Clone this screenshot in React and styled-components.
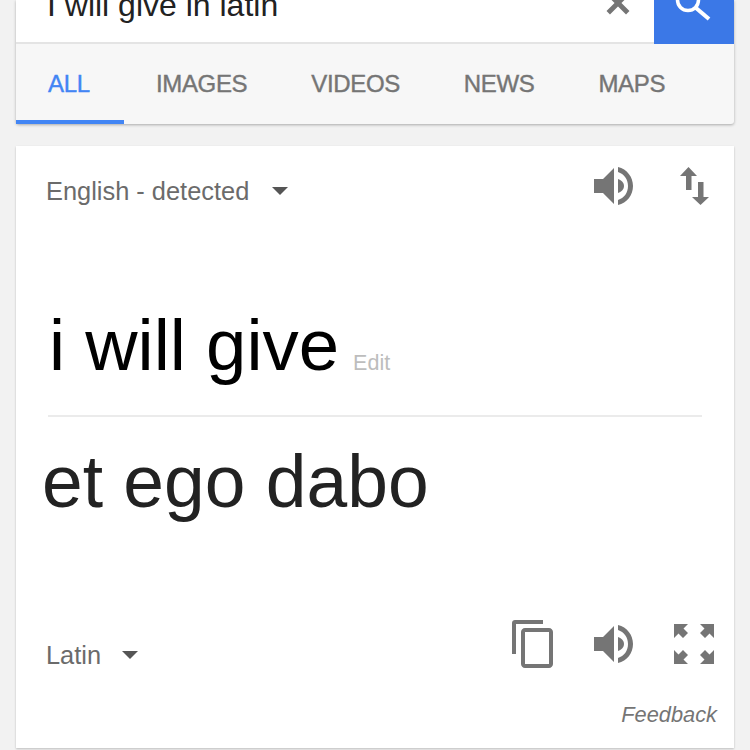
import React from "react"
import styled, { createGlobalStyle } from "styled-components"

const GlobalStyle = createGlobalStyle`
  html, body {
    margin: 0;
    padding: 0;
    background: #f2f2f2;
    font-family: "Liberation Sans", Arial, sans-serif;
  }
`

const Page = styled.div`
  width: 750px;
  height: 750px;
  overflow: hidden;
  padding: 0 16px;
  box-sizing: border-box;
  background: #f2f2f2;
`

const Header = styled.div`
  background: #f7f7f7;
  border-radius: 0 0 3px 3px;
  box-shadow: 0 1px 3px rgba(0, 0, 0, 0.3);
`

const SearchRow = styled.div`
  height: 44px;
  display: flex;
  background: #fff;
`

const QueryBox = styled.div`
  flex: 1;
  height: 44px;
  box-sizing: border-box;
  display: flex;
  justify-content: space-between;
  border-bottom: 2px solid #e4e4e4;
  overflow: hidden;
`

const Query = styled.div`
  align-self: flex-end;
  margin: 0 0 19px 31px;
  font-size: 32px;
  line-height: 36px;
  color: #222;
  white-space: nowrap;
`

const ClearIcon = styled.svg`
  width: 26px;
  height: 26px;
  margin: -10px 23px 0 0;
  flex-shrink: 0;
`

const SearchButton = styled.div`
  width: 80px;
  height: 44px;
  flex-shrink: 0;
  background: #3b78e7;
  overflow: hidden;
  display: flex;
  justify-content: center;
  align-items: flex-end;
`

const SearchIcon = styled.svg`
  width: 44px;
  height: 44px;
  margin-bottom: 19px;
  flex-shrink: 0;
`

const Tabs = styled.div`
  display: flex;
  height: 80px;
`

const Tab = styled.div`
  padding: 4px 32px 0;
  min-width: ${props => (props.active ? "108px" : "0")};
  box-sizing: border-box;
  display: flex;
  align-items: center;
  font-size: 24px;
  letter-spacing: -0.35px;
  -webkit-text-stroke: 0.4px ${props => (props.active ? "#4285f4" : "#757575")};
  color: ${props => (props.active ? "#4285f4" : "#757575")};
  border-bottom: 4px solid ${props => (props.active ? "#4285f4" : "transparent")};
`

const Card = styled.div`
  margin-top: 22px;
  height: 602px;
  background: #fff;
  box-shadow: 0 1px 2px rgba(0, 0, 0, 0.22);
  display: flex;
  flex-direction: column;
`

const TopBar = styled.div`
  height: 90px;
  display: flex;
  justify-content: space-between;
  align-items: center;
  padding: 0 25px 0 30px;
`

const LangPicker = styled.div`
  display: flex;
  align-items: center;
  height: 30px;
  font-size: 25.4px;
  color: #6b6b6b;
`

const SourceLang = styled(LangPicker)``

const TargetLang = styled(LangPicker)`
  margin-top: 20px;
`

const Caret = styled.span`
  width: 0;
  height: 0;
  margin-left: ${props => props.gap}px;
  border-left: 8px solid transparent;
  border-right: 8px solid transparent;
  border-top: 8px solid #555;
`

const TopIcons = styled.div`
  display: flex;
  align-items: center;
  gap: 47px;
  margin-bottom: 10px;
`

const BottomIcons = styled.div`
  display: flex;
  align-items: center;
  gap: 41px;
`

const Icon = styled.svg`
  width: ${props => props.w}px;
  height: ${props => props.h}px;
  fill: #757575;
  display: block;
`

const Source = styled.div`
  margin: 71px 32px 0;
  height: 108px;
  border-bottom: 2px solid #ebebeb;
  display: flex;
  align-items: baseline;
  padding-left: 1px;
`

const SourceText = styled.span`
  font-size: 72.5px;
  line-height: 76px;
  color: #000;
`

const EditLink = styled.span`
  margin-left: 14px;
  font-size: 21.5px;
  color: #bdbdbd;
`

const Target = styled.div`
  margin: 20px 0 0 26px;
  font-size: 73.2px;
  line-height: 90px;
  color: #222;
`

const BottomBar = styled.div`
  margin-top: auto;
  display: flex;
  justify-content: space-between;
  align-items: flex-start;
  padding: 0 20px 0 30px;
`

const Feedback = styled.div`
  padding: 32px 17px 21px 0;
  text-align: right;
  font-size: 21.8px;
  line-height: 25px;
  font-style: italic;
  color: #757575;
`

const Speaker = () => (
  <Icon w={39} h={38} viewBox="0 0 39 38">
    <path d="M0 12h9L20 1v36L9 26H0z" />
    <path d="M24 12c3 1 6 3.500 6 7s-3 6-6 7z" />
    <path d="M24 0C33 2 39 10 39 19S33 36 24 38V33C30 31 34 26 34 19S30 7 24 5z" />
  </Icon>
)

const App = () => {
  return (
    <Page>
      <GlobalStyle />
      <Header>
        <SearchRow>
          <QueryBox>
            <Query>I will give in latin</Query>
            <ClearIcon viewBox="0 0 24 24">
              <path d="M3 3l18 18M21 3L3 21" stroke="#757575" strokeWidth="4.5" fill="none" />
            </ClearIcon>
          </QueryBox>
          <SearchButton>
            <SearchIcon viewBox="0 0 44 44">
              <circle cx="16" cy="19" r="10.500" stroke="#fff" strokeWidth="3.500" fill="none" />
              <path d="M24 27L37 38" stroke="#fff" strokeWidth="4" fill="none" />
            </SearchIcon>
          </SearchButton>
        </SearchRow>
        <Tabs>
          <Tab active>ALL</Tab>
          <Tab>IMAGES</Tab>
          <Tab>VIDEOS</Tab>
          <Tab>NEWS</Tab>
          <Tab>MAPS</Tab>
        </Tabs>
      </Header>
      <Card>
        <TopBar>
          <SourceLang>
            English - detected
            <Caret gap={23} />
          </SourceLang>
          <TopIcons>
            <Speaker />
            <Icon w={29} h={38} viewBox="0 0 29 38">
              <path d="M8.500 0L17 9h-5.500v14H6V9H0zM18 15h5.500v15H29l-8.500 8L12 30h6z" />
            </Icon>
          </TopIcons>
        </TopBar>
        <Source>
          <SourceText>i will give</SourceText>
          <EditLink>Edit</EditLink>
        </Source>
        <Target>et ego dabo</Target>
        <BottomBar>
          <TargetLang>
            Latin
            <Caret gap={21} />
          </TargetLang>
          <BottomIcons>
            <Icon w={41} h={48} viewBox="0 0 41 48">
              <path d="M31 0H3C1.300 0 0 1.300 0 3v31h4V4h27V0z" />
              <path d="M37 8H13c-2.200 0-4 1.800-4 4v32c0 2.200 1.800 4 4 4h24c2.200 0 4-1.800 4-4V12c0-2.200-1.800-4-4-4zm0 36H13V12h24v32z" />
            </Icon>
            <Speaker />
            <Icon w={40} h={40} viewBox="4 4 40 40">
              <path d="M4 4h14l-4.500 4.500 4.500 4.500-5 5-4.500-4.500L4 18zM44 4v14l-4.500-4.500L35 18l-5-5 4.500-4.500L30 4zM4 44V30l4.500 4.500L13 30l5 5-4.500 4.500L18 44zM44 44H30l4.500-4.500L30 35l5-5 4.500 4.500L44 30z" />
            </Icon>
          </BottomIcons>
        </BottomBar>
        <Feedback>Feedback</Feedback>
      </Card>
    </Page>
  )
}

export default App
